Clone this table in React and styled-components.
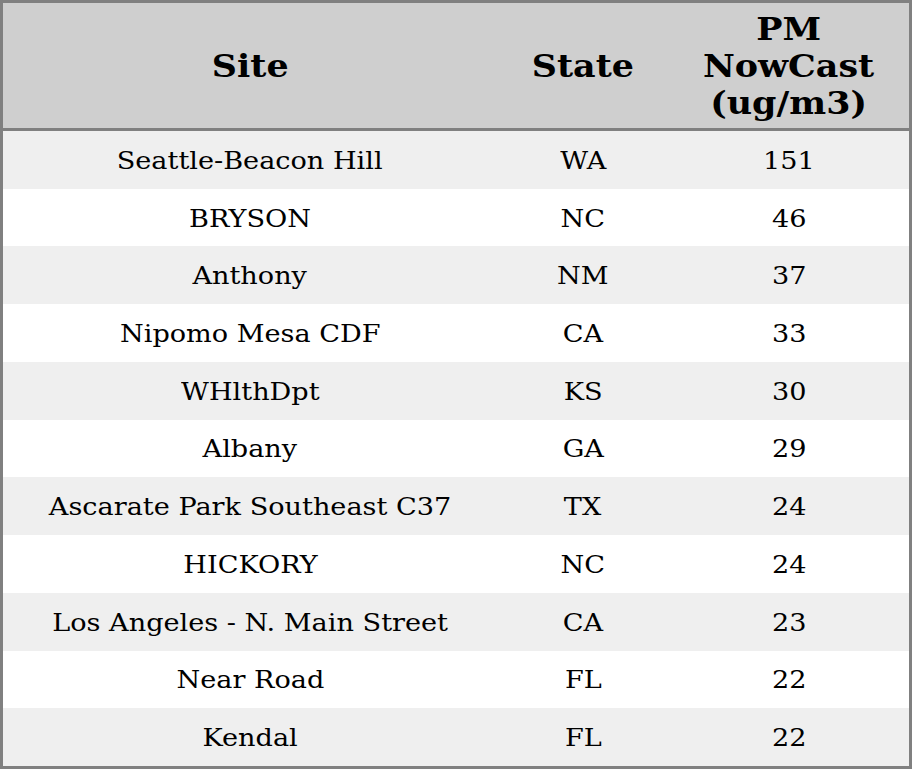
import React from 'react'
import styled, { createGlobalStyle } from 'styled-components'

const GlobalStyle = createGlobalStyle`
  html, body {
    margin: 0;
    padding: 0;
    background: #ffffff;
  }
  body {
    font-family: 'DejaVu Serif', serif;
  }
`

const rows = [
  ['Seattle-Beacon Hill', 'WA', 151],
  ['BRYSON', 'NC', 46],
  ['Anthony', 'NM', 37],
  ['Nipomo Mesa CDF', 'CA', 33],
  ['WHlthDpt', 'KS', 30],
  ['Albany', 'GA', 29],
  ['Ascarate Park Southeast C37', 'TX', 24],
  ['HICKORY', 'NC', 24],
  ['Los Angeles - N. Main Street', 'CA', 23],
  ['Near Road', 'FL', 22],
  ['Kendal', 'FL', 22],
]

const Table = styled.div`
  box-sizing: border-box;
  width: 912px;
  height: 769px;
  border: 3px solid #808080;
  display: grid;
  grid-template-columns: 494px 172px 1fr;
  grid-template-rows: 128px repeat(11, 1fr);
  color: #000000;
`

const HeadCell = styled.div`
  display: flex;
  align-items: center;
  justify-content: center;
  text-align: center;
  background: #cfcfcf;
  border-bottom: 3px solid #808080;
  font-size: 32px;
  font-weight: bold;
  line-height: 37px;
  padding-top: 1px;
`

const Cell = styled.div`
  display: flex;
  align-items: center;
  justify-content: center;
  padding-top: 2px;
  background: ${(p) => (p.$shade ? '#efefef' : '#ffffff')};
  font-size: 24px;
`

// the reference glyphs are drawn a little wider than the font's own proportions
const Wide = styled.span`
  display: inline-block;
  white-space: nowrap;
  transform: scaleX(${(p) => p.$x});
`

export default function App() {
  return (
    <>
      <GlobalStyle />
      <Table>
        <HeadCell>
          <Wide $x={1.09}>Site</Wide>
        </HeadCell>
        <HeadCell>
          <Wide $x={1.09}>State</Wide>
        </HeadCell>
        <HeadCell>
          <Wide $x={1.09}>
            PM
            <br />
            NowCast
            <br />
            (ug/m3)
          </Wide>
        </HeadCell>
        {rows.map(([site, state, value], i) => (
          <React.Fragment key={site}>
            <Cell $shade={i % 2 === 0}>
              <Wide $x={1.13}>{site}</Wide>
            </Cell>
            <Cell $shade={i % 2 === 0}>
              <Wide $x={1.13}>{state}</Wide>
            </Cell>
            <Cell $shade={i % 2 === 0}>
              <Wide $x={1.13}>{value}</Wide>
            </Cell>
          </React.Fragment>
        ))}
      </Table>
    </>
  )
}
